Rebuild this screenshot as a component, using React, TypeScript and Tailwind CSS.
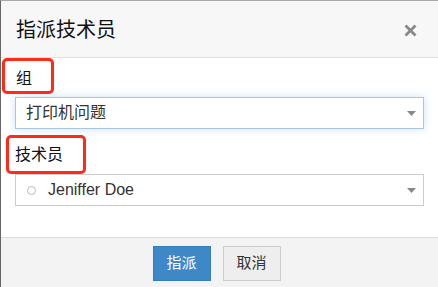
const cjk = { fontFamily: '"Liberation Sans", "Noto Sans CJK SC", sans-serif' };

function Arrow() {
  return (
    <svg width="9" height="5" viewBox="0 0 9 5" className="shrink-0">
      <path d="M0 0h9L4.5 5z" fill="#888" />
    </svg>
  );
}

export default function App() {
  return (
    <div
      className="w-[438px] h-[287px] bg-white border-l border-t border-l-[#666] border-t-[#aaa] flex flex-col relative overflow-hidden"
      style={cjk}
    >
      {/* header */}
      <div className="h-[57px] shrink-0 bg-[#f7f7f7] border-b border-[#e2e2e2] flex items-center justify-between pl-[15px] pr-[21px]">
        <span className="text-[20px] leading-[24px] text-[#111] mt-[2px]">指派技术员</span>
        <svg width="13" height="13" viewBox="0 0 13 13" className="mt-[2px]">
          <path d="M1.5 1.5l10 10M11.5 1.5l-10 10" stroke="#888" strokeWidth="2.8" />
        </svg>
      </div>

      {/* body */}
      <div className="flex-1 px-[14px] pt-[10px]">
        <div className="text-[16px] leading-[22px] text-[#111] pl-[1px]">组</div>
        <div className="mt-[7px] h-[32px] border border-[#a9c5df] shadow-[0_0_8px_rgba(102,175,233,0.35)] flex items-center justify-between pl-[10px] pr-[7px]">
          <span className="text-[16px] text-[#333]">打印机问题</span>
          <Arrow />
        </div>

        <div className="mt-[15px] text-[16px] leading-[22px] text-[#111]">技术员</div>
        <div className="mt-[8px] h-[32px] border border-[#ccc] flex items-center justify-between pl-[11px] pr-[7px]">
          <div className="flex items-center gap-[12px]">
            <span className="w-[9px] h-[9px] rounded-full border border-[#bbb]" />
            <span className="text-[16px] text-[#333]">Jeniffer Doe</span>
          </div>
          <Arrow />
        </div>
      </div>

      {/* footer */}
      <div className="h-[50px] shrink-0 bg-[#f3f3f3] border-t border-[#dcdcdc] flex justify-center gap-[12px] pt-[8px] pr-[6px]">
        <button className="w-[58px] h-[35px] bg-[#3f88c8] border border-[#357ebd] text-white text-[15px]">指派</button>
        <button className="w-[58px] h-[35px] bg-[#eeeeee] border border-[#ccc] text-[#333] text-[15px]">取消</button>
      </div>

      {/* annotation boxes */}
      <div className="absolute left-[1px] top-[57px] w-[52px] h-[36px] border-[3px] border-[#ff2a1a] rounded-[5px]" />
      <div className="absolute left-[5px] top-[134px] w-[80px] h-[39px] border-[3px] border-[#ff2a1a] rounded-[5px]" />
    </div>
  );
}
